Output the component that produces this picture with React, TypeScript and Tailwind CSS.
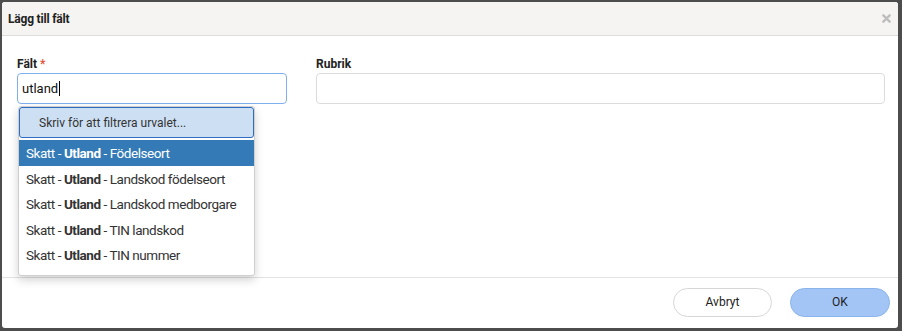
import React from "react";

const items = ["Födelseort", "Landskod födelseort", "Landskod medborgare", "TIN landskod", "TIN nummer"];

export default function App() {
    return (
        <div className="w-[902px] h-[331px] bg-[#4d4d4d] pt-[2px] pl-[2px] pr-[4px] pb-[3px] font-['Roboto',sans-serif]">
            <div className="relative w-full h-full bg-white rounded-[3px] flex flex-col overflow-hidden">
                <div className="h-[34px] shrink-0 bg-[#f5f4f2] border-b border-[#dcdcdc] flex items-center justify-between pl-[6px] pr-[6px]">
                    <span className="text-[12px] font-bold text-[#222] tracking-[-0.2px]">Lägg till fält</span>
                    <svg width="9" height="9" viewBox="0 0 10 10" className="mr-[1px]">
                        <path d="M1.5 1.5 L8.5 8.5 M8.5 1.5 L1.5 8.5" stroke="#bdbdbd" strokeWidth="2.6" strokeLinecap="round" />
                    </svg>
                </div>
                <div className="flex-1 flex gap-[29px] pl-[15px] pt-[20px]">
                    <div className="relative w-[270px] shrink-0">
                        <div className="text-[12px] font-bold text-[#222] mb-[1px] leading-[16px]">
                            Fält <span className="text-[#e0533a]">*</span>
                        </div>
                        <div className="h-[31px] border border-[#7fb0ee] rounded-[4px] flex items-center px-[4px] text-[13px] text-[#111]">
                            utland<span className="w-px h-[15px] bg-black ml-px" />
                        </div>
                        <div className="absolute left-px top-[50px] w-[237px] bg-white border border-[#cfcfcf] rounded-[3px] shadow-[0_4px_10px_rgba(0,0,0,0.18)] z-10 pb-[7px]">
                            <div className="h-[31px] bg-[#cde0f3] border border-[#2d6cc0] rounded-[3px] flex items-center pl-[19px] text-[12px] text-[#333]">
                                Skriv för att filtrera urvalet...
                            </div>
                            {items.map((t, i) => (
                                <div
                                    key={t}
                                    className={
                                        i === 0
                                            ? "h-[26px] mt-[2px] bg-[#337ab7] text-white flex items-center pl-[7px] text-[13.5px] tracking-[-0.45px] whitespace-pre"
                                            : "h-[25.5px] text-[#333] flex items-center pl-[7px] text-[13.5px] tracking-[-0.45px] whitespace-pre"
                                    }
                                >
                                    {"Skatt - "}
                                    <b>Utland</b>
                                    {" - " + t}
                                </div>
                            ))}
                        </div>
                    </div>
                    <div className="w-[569px] shrink-0">
                        <div className="text-[12px] font-bold text-[#222] mb-[1px] leading-[16px]">Rubrik</div>
                        <div className="h-[31px] border border-[#dcdcdc] rounded-[4px]" />
                    </div>
                </div>
                <div className="h-[51px] shrink-0 border-t border-[#e2e2e2] flex items-center justify-end gap-[18px] pr-[8px] pb-[2px]">
                    <button className="w-[99px] h-[29px] rounded-full border border-[#d6d6d6] bg-white text-[12px] text-[#222]">Avbryt</button>
                    <button className="w-[100px] h-[29px] rounded-full border border-[#8ab4ec] bg-[#a3c5f5] text-[12px] text-[#222]">OK</button>
                </div>
            </div>
        </div>
    );
}
